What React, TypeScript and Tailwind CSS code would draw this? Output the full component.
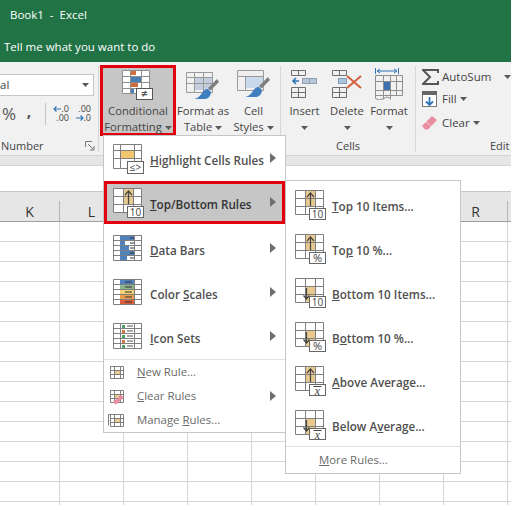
import React from 'react';

const font = "[font-family:'Open_Sans',sans-serif]";
// only K, L and R show, the two menus cover the rest of the header row
const columns = ['K', 'L', '', '', '', '', '', 'R', ''];
const rows = Array.from({ length: 15 }, (_, i) => i);

const GRID = '#7f7f7f';
const GOLD = '#e8c98f';

function Caret() {
  return (
    <svg width="7" height="4" viewBox="0 0 7 4" className="inline-block">
      <path d="M0 0h7L3.5 4z" fill="#595959" />
    </svg>
  );
}

function Arrow() {
  return (
    <svg width="6" height="10" viewBox="0 0 6 10" className="mb-[7px] shrink-0">
      <path d="M0 0l6 5-6 5z" fill="#6f6f6f" />
    </svg>
  );
}

function Grid3() {
  return (
    <path
      d="M.5.5h28v24H.5zM10.5.5v24M20.5.5v24M.5 8.5h28M.5 16.5h28"
      fill="none"
      stroke={GRID}
    />
  );
}

function Badge({ label, size = 10 }: { label: string; size?: number }) {
  return (
    <g>
      <rect x="14.5" y="18.5" width="16" height="11" fill="#fff" stroke="#666" />
      <text x="22.5" y="27.5" textAnchor="middle" fontSize={size} fill="#444" fontFamily="Open Sans">
        {label}
      </text>
    </g>
  );
}

function MeanBadge() {
  return (
    <g>
      <rect x="14.5" y="18.5" width="16" height="11" fill="#fff" stroke="#666" />
      <path d="M18.5 20.5h8" stroke="#444" />
      <text x="22.5" y="28.5" textAnchor="middle" fontSize="12" fontStyle="italic" fill="#444" fontFamily="Liberation Serif">
        x
      </text>
    </g>
  );
}

function RuleIcon({ dir, badge }: { dir: 'up' | 'down'; badge: React.ReactNode }) {
  return (
    <svg width="32" height="32" viewBox="0 0 32 32" className="shrink-0 overflow-visible">
      <rect x="0" y="0" width="29" height="25" fill="#fff" />
      {dir === 'up' ? (
        <rect x="10" y="0" width="11" height="17" fill={GOLD} />
      ) : (
        <rect x="10" y="8" width="11" height="17" fill={GOLD} />
      )}
      <Grid3 />
      {dir === 'up' ? (
        <path d="M15.5 16V3M12 7l3.5-4 3.5 4" fill="none" stroke="#444" strokeWidth="1.2" />
      ) : (
        <path d="M11.5 10v11M8.5 17.5l3 3.5 3-3.5" fill="none" stroke="#444" strokeWidth="1.2" />
      )}
      {badge}
    </svg>
  );
}

function HighlightIcon() {
  return (
    <svg width="32" height="32" viewBox="0 0 32 32" className="shrink-0 overflow-visible">
      <rect x="7" y="6" width="14" height="8" fill="#f0c66f" />
      <path d="M.5.5h28v24H.5zM7.5.5v24M21.5.5v24M.5 6.5h28M.5 14.5h28" fill="none" stroke={GRID} />
      <rect x="14.5" y="17.5" width="16" height="12" fill="#fff" stroke="#666" />
      <text x="22.5" y="27" textAnchor="middle" fontSize="10" fill="#444" fontFamily="Open Sans">
        {'≤>'}
      </text>
    </svg>
  );
}

function DataBarsIcon() {
  const bars = [14, 5, 9, 14, 7];
  return (
    <svg width="32" height="32" viewBox="0 -1 32 32" className="shrink-0 overflow-visible">
      <path d="M.5.5h28v25H.5zM7.5.5v25M21.5.5v25M.5 5.5h28M.5 10.5h28M.5 15.5h28M.5 20.5h28" fill="none" stroke={GRID} />
      {bars.map((w, i) => (
        <g key={i}>
          <rect x="7" y={i * 5 + 1} width={w} height="4" fill="#4f81bd" />
          <path d={`M17 ${i * 5 + 3}h4`} stroke="#333" />
        </g>
      ))}
    </svg>
  );
}

function ColorScalesIcon() {
  const colors = ['#4f81bd', '#8db28e', '#f2d279', '#ef9f4c', '#dd5c39'];
  return (
    <svg width="32" height="32" viewBox="0 -1 32 32" className="shrink-0 overflow-visible">
      <path d="M.5.5h28v25H.5zM7.5.5v25M21.5.5v25M.5 5.5h28M.5 10.5h28M.5 15.5h28M.5 20.5h28" fill="none" stroke={GRID} />
      {colors.map((c, i) => (
        <g key={c}>
          <rect x="7" y={i * 5 + 1} width="14" height="4" fill={c} />
          <path d={`M12 ${i * 5 + 3}h7`} stroke="#333" />
        </g>
      ))}
    </svg>
  );
}

function IconSetsIcon() {
  const dots = ['#4aa564', '#d9743f', '#4aa564', '#d9743f', '#4aa564'];
  return (
    <svg width="32" height="32" viewBox="0 -1 32 32" className="shrink-0 overflow-visible">
      <path d="M.5.5h28v25H.5zM7.5.5v25M21.5.5v25M.5 5.5h28M.5 10.5h28M.5 15.5h28M.5 20.5h28" fill="none" stroke={GRID} />
      {dots.map((c, i) => (
        <g key={i}>
          <rect x="9" y={i * 5 + 2} width="3" height="3" fill={c} />
          <path d={`M14 ${i * 5 + 3}h6`} stroke="#555" />
        </g>
      ))}
    </svg>
  );
}

function SmallIcon({ kind }: { kind: 'new' | 'clear' | 'manage' }) {
  return (
    <svg width="16" height="16" viewBox="0 -2 16 16" className="shrink-0 overflow-visible">
      {kind === 'manage' && <path d="M-1.5 11.5v-11h12" fill="none" stroke={GRID} />}
      <rect x="4" y="4" width="6" height="5" fill={GOLD} />
      <path d="M.5.5h13v12H.5zM4.5.5v12M10.5.5v12M.5 4.5h13M.5 8.5h13" fill="none" stroke={GRID} />
      {kind === 'clear' && <path d="M3 12l8-7 3 2.5-8 7-3-2z" fill="#e88da0" />}
    </svg>
  );
}

function BigItem({ icon, arrow, active, children }: { icon: React.ReactNode; arrow?: boolean; active?: boolean; children: React.ReactNode }) {
  if (active) {
    return (
      <div className="flex h-[43px] items-center border-[3px] border-[#e3000f] bg-[#c6c6c6] pt-[5px] pr-[6px] pl-[6px]">
        <div className="w-[37px] pb-[2px]">{icon}</div>
        <div className="flex-1 text-[11.7px] font-semibold whitespace-nowrap text-[#333]">{children}</div>
        {arrow && <Arrow />}
      </div>
    );
  }
  return (
    <div className="flex h-[40px] items-center pr-[9px] pl-[9px]">
      <div className="w-[37px] pb-[2px]">{icon}</div>
      <div className="flex-1 text-[11.7px] font-semibold whitespace-nowrap text-[#505050]">{children}</div>
      {arrow && <Arrow />}
    </div>
  );
}

function SmallItem({ kind, arrow, children }: { kind: 'new' | 'clear' | 'manage'; arrow?: boolean; children: React.ReactNode }) {
  return (
    <div className="flex h-[24px] items-center pr-[9px] pl-[6px]">
      <div className="w-[27px]">
        <SmallIcon kind={kind} />
      </div>
      <div className="flex-1 text-[11.4px] text-[#6a6a6a]">{children}</div>
      {arrow && (
        <svg width="6" height="10" viewBox="0 0 6 10">
          <path d="M0 0l6 5-6 5z" fill="#6f6f6f" />
        </svg>
      )}
    </div>
  );
}

function TallButton({ width, icon, active, lines }: { width: string; icon: React.ReactNode; active?: boolean; lines: React.ReactNode[] }) {
  return (
    <div className={`${width} ${active ? 'border-[3px] border-[#e3000f] bg-[#c6c6c6]' : 'pt-[3px]'} flex h-[71px] shrink-0 flex-col items-center text-[11.2px] leading-[16px] text-[#444]`}>
      <div className="h-[32px]">{icon}</div>
      <div className="mt-[3px] whitespace-nowrap">{lines[0]}</div>
      <div className="whitespace-nowrap">{lines[1]}</div>
    </div>
  );
}

function Sep() {
  return <div className="mt-[4px] h-[86px] w-px shrink-0 bg-[#d6d6d6]" />;
}

function GroupLabel({ children }: { children: React.ReactNode }) {
  return <div className="flex h-[18px] items-center justify-center text-[11px] text-[#444]">{children}</div>;
}

function CondIcon() {
  return (
    <svg width="32" height="32" viewBox="0 0 32 32" className="overflow-visible">
      <rect x="0" y="2" width="28" height="24" fill="#fff" />
      <rect x="8" y="2" width="6" height="5" fill="#d26d3e" />
      <rect x="8" y="9" width="11" height="5" fill="#4a7fb5" />
      <rect x="8" y="15" width="8" height="4" fill="#d26d3e" />
      <rect x="8" y="20" width="4" height="5" fill="#4a7fb5" />
      <path d="M.5 2.5h27v23H.5zM8.5 2.5v23M19.5 2.5v23M.5 8.5h27M.5 14.5h27M.5 20.5h27" fill="none" stroke="#8f8f8f" />
      <rect x="14.5" y="20.5" width="16" height="11" fill="#fff" stroke="#555" />
      <text x="22.5" y="30" textAnchor="middle" fontSize="12" fill="#333" fontFamily="Open Sans">
        ≠
      </text>
    </svg>
  );
}

function TableIcon() {
  return (
    <svg width="34" height="32" viewBox="0 0 34 32" className="overflow-visible">
      <rect x="8" y="9" width="18" height="13" fill="#c3cfdf" />
      <path d="M.5 4.5h26v20H.5zM8.5 4.5v20M17.5 4.5v20M.5 9.5h26M.5 15.5h26" fill="none" stroke="#9a9a9a" />
      <path d="M31 11l-9 9 2.5 2.5L33 14z" fill="#7f7f7f" />
      <path d="M22 21c-3 0-5 2-6 4-1 2-5 6-8 6h11c3 0 6-3 6-7z" fill="#3f7fbf" />
    </svg>
  );
}

function StylesIcon() {
  return (
    <svg width="34" height="32" viewBox="0 0 34 32" className="overflow-visible">
      <rect x="1" y="3" width="26" height="5" fill="#eeeeee" />
      <rect x="8" y="8" width="18" height="12" fill="#c9d8ea" />
      <path d="M.5 2.5h26v20H.5zM8.5 8.5v14M.5 8.5h26" fill="none" stroke="#9a9a9a" />
      <path d="M31 9l-9 9 2.5 2.5L33 12z" fill="#7f7f7f" />
      <path d="M22 19c-3 0-5 2-6 4-1 2-5 6-8 6h11c3 0 6-3 6-7z" fill="#3f7fbf" />
    </svg>
  );
}

function InsertIcon() {
  return (
    <svg width="27" height="32" viewBox="0 0 27 32">
      <path d="M.5 2.5h14v5H.5zM7.5 2.5v5M.5 19.5h14v10H.5zM7.5 19.5v10M.5 24.5h14" fill="none" stroke="#6f6f6f" />
      <rect x="11.5" y="10.5" width="14" height="5" fill="#b8c8d8" stroke="#8f9fb0" />
      <path d="M18.5 10.5v5" stroke="#8f9fb0" />
      <path d="M8 13H2M5 10l-3 3 3 3" fill="none" stroke="#2f75b5" strokeWidth="1.6" />
    </svg>
  );
}

function DeleteIcon() {
  return (
    <svg width="30" height="32" viewBox="0 0 30 32">
      <path d="M.5 2.5h14v5H.5zM7.5 2.5v5M.5 19.5h14v10H.5zM7.5 19.5v10M.5 24.5h14" fill="none" stroke="#6f6f6f" />
      <rect x="6.5" y="10.5" width="8" height="5" fill="#a9c4dc" stroke="#7f9fbb" />
      <path d="M15 8l14 12M29 8L15 20" stroke="#d2603c" strokeWidth="2" />
    </svg>
  );
}

function FormatIcon() {
  return (
    <svg width="29" height="32" viewBox="0 0 29 32">
      <path d="M.5 0v6M23.5 0v6" stroke="#2f75b5" />
      <path d="M2 3h20M5 1L2 3l3 2M19 1l3 2-3 2" fill="none" stroke="#2f75b5" />
      <rect x="8" y="13" width="8" height="9" fill="#3d6fb0" />
      <path d="M.5 7.5h27v20H.5zM8.5 7.5v24M15.5 7.5v24M21.5 7.5v20M.5 13.5h27M.5 22.5h27" fill="none" stroke="#8f8f8f" />
      <path d="M.5 27.5v3q4 3 8 0 3.5-3 7 0" fill="none" stroke="#8f8f8f" />
    </svg>
  );
}

function DecIcon({ left }: { left: boolean }) {
  return (
    <svg width="16" height="20" viewBox="0 0 16 20" className="shrink-0 overflow-visible">
      <text x="16" y="8" textAnchor="end" fontSize="9" fill="#444" fontFamily="Open Sans">
        {left ? '.0' : '.00'}
      </text>
      <text x="16" y="17" textAnchor="end" fontSize="9" fill="#444" fontFamily="Open Sans">
        {left ? '.00' : '.0'}
      </text>
      {left ? (
        <path d="M8 5H1M3.5 2.5L1 5l2.5 2.5" fill="none" stroke="#2f75b5" strokeWidth="1.2" />
      ) : (
        <path d="M1 14h7M5.5 11.5L8 14l-2.500 2.500" fill="none" stroke="#2f75b5" strokeWidth="1.2" />
      )}
    </svg>
  );
}

function NumberGroup() {
  return (
    <div className="w-[98px] shrink-0">
      <div className="h-[75px] pt-[12px]">
        <div className="flex h-[22px] w-[94px] items-center justify-between border border-l-0 border-[#c6c6c6] bg-white pr-[4px] text-[11.5px] text-[#444]">
          <span>al</span>
          <Caret />
        </div>
        <div className="mt-[8px] flex h-[20px] items-center">
          <span className="ml-[1px] w-[16px] text-center text-[17px] text-[#555]">%</span>
          <span className="ml-[7px] w-[10px] -translate-y-[3px] text-center text-[16px] font-bold text-[#555]">,</span>
          <div className="ml-[11px] h-[22px] w-px bg-[#c6c6c6]" />
          <div className="ml-[7px]">
            <DecIcon left />
          </div>
          <div className="ml-[6px]">
            <DecIcon left={false} />
          </div>
        </div>
      </div>
      <div className="flex h-[18px] items-center justify-between pr-[3px] pl-[1px] text-[11px] text-[#444]">
        <span>Number</span>
        <svg width="10" height="10" viewBox="0 0 10 10">
          <path d="M.5 6V.5H7" fill="none" stroke="#777" />
          <path d="M3 3l5 5M9 5v4H5" fill="none" stroke="#777" />
        </svg>
      </div>
    </div>
  );
}

function StylesGroup() {
  return (
    <div className="flex w-[181px] shrink-0 items-start pl-[1px]">
      <div className="mt-[3px]">
        <TallButton
          width="w-[76px]"
          active
          icon={<CondIcon />}
          lines={['Conditional', <span key="f">Formatting <Caret /></span>]}
        />
      </div>
      <div className="mt-[3px]">
        <TallButton width="w-[54px]" icon={<TableIcon />} lines={['Format as', <span key="t">Table <Caret /></span>]} />
      </div>
      <div className="mt-[3px]">
        <TallButton width="w-[47px]" icon={<StylesIcon />} lines={['Cell', <span key="s">Styles <Caret /></span>]} />
      </div>
    </div>
  );
}

function CellsGroup() {
  return (
    <div className="w-[134px] shrink-0">
      <div className="flex h-[75px] pt-[3px]">
        <TallButton width="w-[47px]" icon={<InsertIcon />} lines={['Insert', <Caret key="c" />]} />
        <TallButton width="w-[38px]" icon={<DeleteIcon />} lines={['Delete', <Caret key="c" />]} />
        <TallButton width="w-[46px]" icon={<FormatIcon />} lines={['Format', <Caret key="c" />]} />
      </div>
      <GroupLabel>Cells</GroupLabel>
    </div>
  );
}

function EditingGroup() {
  return (
    <div className="w-[95px] shrink-0">
      <div className="h-[75px] pt-[4px] pl-[6px] text-[11.5px] text-[#444]">
        <div className="flex h-[22px] items-center">
          <div className="w-[20px]">
            <svg width="17" height="16" viewBox="0 0 17 16">
              <path d="M16 4V1H1l7 7-7 7h15v-3" fill="none" stroke="#555" strokeWidth="2" />
            </svg>
          </div>
          <span className="w-[62px]">AutoSum</span>
          <Caret />
        </div>
        <div className="flex h-[22px] items-center">
          <div className="w-[20px]">
            <svg width="15" height="16" viewBox="0 0 15 16">
              <rect x=".5" y=".5" width="14" height="15" fill="#fff" stroke="#777" />
              <rect x="0" y="0" width="15" height="4" fill="#666" />
              <path d="M7.5 6v8M4 10.5L7.5 14l3.5-3.5" fill="none" stroke="#2f75b5" strokeWidth="1.8" />
            </svg>
          </div>
          <span className="mr-[3px]">Fill</span>
          <Caret />
        </div>
        <div className="mt-[2px] flex h-[22px] items-center">
          <div className="w-[20px]">
            <svg width="15" height="14" viewBox="0 0 15 14">
              <path d="M10 0l5 4-9 9.5H3L0 10z" fill="#e88da0" />
              <path d="M4 6l5 4" stroke="#f6c9d2" />
            </svg>
          </div>
          <span className="mr-[3px]">Clear</span>
          <Caret />
        </div>
      </div>
      <div className="flex h-[18px] items-center pl-[74px] text-[11px] text-[#444]">Edit</div>
    </div>
  );
}

function CondMenu() {
  return (
    <div className="absolute top-[135px] left-[103px] w-[183px] border border-[#c6c6c6] bg-white pt-[5px]">
      <BigItem icon={<HighlightIcon />} arrow>
        <u>H</u>ighlight Cells Rules
      </BigItem>
      <BigItem icon={<RuleIcon dir="up" badge={<Badge label="10" />} />} arrow active>
        <u>T</u>op/Bottom Rules
      </BigItem>
      <div className="mt-[7px] flex flex-col gap-[4px]">
        <BigItem icon={<DataBarsIcon />} arrow>
          <u>D</u>ata Bars
        </BigItem>
        <BigItem icon={<ColorScalesIcon />} arrow>
          Color <u>S</u>cales
        </BigItem>
        <BigItem icon={<IconSetsIcon />} arrow>
          <u>I</u>con Sets
        </BigItem>
      </div>
      <div className="border-t border-[#e1e1e1]">
        <SmallItem kind="new">
          <u>N</u>ew Rule...
        </SmallItem>
        <SmallItem kind="clear" arrow>
          <u>C</u>lear Rules
        </SmallItem>
        <SmallItem kind="manage">
          Manage <u>R</u>ules...
        </SmallItem>
      </div>
    </div>
  );
}

function TopBottomMenu() {
  return (
    <div className="absolute top-[180px] left-[285px] w-[176px] border border-[#c6c6c6] bg-white pt-[6px]">
      <div className="flex flex-col gap-[4px]">
        <BigItem icon={<RuleIcon dir="up" badge={<Badge label="10" />} />}>
          <u>T</u>op 10 Items...
        </BigItem>
        <BigItem icon={<RuleIcon dir="up" badge={<Badge label="%" size={11} />} />}>
          To<u>p</u> 10 %...
        </BigItem>
        <BigItem icon={<RuleIcon dir="down" badge={<Badge label="10" />} />}>
          <u>B</u>ottom 10 Items...
        </BigItem>
        <BigItem icon={<RuleIcon dir="down" badge={<Badge label="%" size={11} />} />}>
          B<u>o</u>ttom 10 %...
        </BigItem>
        <BigItem icon={<RuleIcon dir="up" badge={<MeanBadge />} />}>
          <u>A</u>bove Average...
        </BigItem>
        <BigItem icon={<RuleIcon dir="down" badge={<MeanBadge />} />}>
          Below A<u>v</u>erage...
        </BigItem>
      </div>
      <div className="-mt-px flex h-[27px] items-center border-t border-[#e1e1e1] pl-[33px] text-[11.4px] text-[#6a6a6a]">
        <span>
          <u>M</u>ore Rules...
        </span>
      </div>
    </div>
  );
}

export default function App() {
  return (
    <div className={`${font} relative h-[505px] w-[511px] overflow-hidden bg-white`}>
      <div className="h-[62px] bg-[#217346] text-white">
        <div className="flex h-[30px] items-center pl-[10px] text-[11.5px]">Book1&nbsp; -&nbsp; Excel</div>
        <div className="flex h-[34px] items-center pl-[4px] text-[11.5px]">Tell me what you want to do</div>
      </div>

      <div className="flex h-[93px] bg-[#f1f1f1]">
        <NumberGroup />
        <Sep />
        <StylesGroup />
        <Sep />
        <CellsGroup />
        <Sep />
        <EditingGroup />
      </div>

      <div className="h-[11px] border-y border-[#d4d4d4] bg-[#e6e6e6]" />
      <div className="h-[25px] bg-white" />

      <div className="grid w-[572px] grid-cols-[60px_repeat(8,64px)]">
        {columns.map((c, i) => (
          <div key={i} className="flex h-[31px] items-end border-t border-b border-t-[#c6c6c6] border-b-[#9f9f9f] bg-[#e6e6e6]">
            <div className="flex h-[20px] w-full items-center justify-center border-r border-[#b5b5b5] text-[14px] text-[#333]">
              {c}
            </div>
          </div>
        ))}
        {rows.map((r) =>
          columns.map((_, i) => <div key={`${i}-${r}`} className="h-[20px] border-r border-b border-[#d4d4d4]" />)
        )}
      </div>

      <CondMenu />
      <TopBottomMenu />
    </div>
  );
}
